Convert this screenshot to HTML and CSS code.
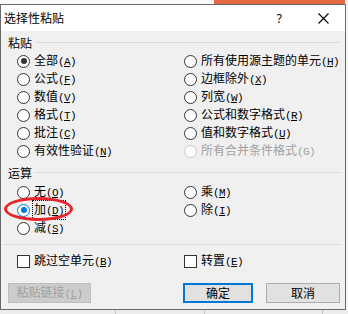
FILE: index.html
```html
<!DOCTYPE html>
<html lang="zh-CN">
<head>
<meta charset="utf-8">
<title>选择性粘贴</title>
<link rel="stylesheet" href="styles.css">
</head>
<body>
<div class="topstrip"><div class="ts-left"></div><div class="ts-banner"></div><div class="ts-right"></div></div>
<div class="stage">
  <div class="dialog">
    <div class="titlebar">
      <span class="title">选择性粘贴</span>
      <span class="help">?</span>
      <svg class="close" width="11" height="11" viewBox="0 0 11 11"><path d="M0.5 0.5 L10.5 10.5 M10.5 0.5 L0.5 10.5" stroke="#000" stroke-width="1.1" fill="none"/></svg>
    </div>
    <div class="content">
      <div class="group-head first"><span class="group-label">粘贴</span><span class="group-line"></span></div>
      <div class="opts paste">
        <label class="opt"><span class="radio checked"></span><span>全部<span class="acc">(<u>A</u>)</span></span></label>
        <label class="opt"><span class="radio"></span><span>所有使用源主题的单元<span class="acc">(<u>H</u>)</span></span></label>
        <label class="opt"><span class="radio"></span><span>公式<span class="acc">(<u>F</u>)</span></span></label>
        <label class="opt"><span class="radio"></span><span>边框除外<span class="acc">(<u>X</u>)</span></span></label>
        <label class="opt"><span class="radio"></span><span>数值<span class="acc">(<u>V</u>)</span></span></label>
        <label class="opt"><span class="radio"></span><span>列宽<span class="acc">(<u>W</u>)</span></span></label>
        <label class="opt"><span class="radio"></span><span>格式<span class="acc">(<u>T</u>)</span></span></label>
        <label class="opt"><span class="radio"></span><span>公式和数字格式<span class="acc">(<u>R</u>)</span></span></label>
        <label class="opt"><span class="radio"></span><span>批注<span class="acc">(<u>C</u>)</span></span></label>
        <label class="opt"><span class="radio"></span><span>值和数字格式<span class="acc">(<u>U</u>)</span></span></label>
        <label class="opt"><span class="radio"></span><span>有效性验证<span class="acc">(<u>N</u>)</span></span></label>
        <label class="opt disabled"><span class="radio"></span><span>所有合并条件格式<span class="acc">(G)</span></span></label>
      </div>
      <div class="group-head"><span class="group-label">运算</span><span class="group-line"></span></div>
      <div class="opts ops">
        <label class="opt"><span class="radio"></span><span>无<span class="acc">(<u>O</u>)</span></span></label>
        <label class="opt"><span class="radio"></span><span>乘<span class="acc">(<u>M</u>)</span></span></label>
        <label class="opt"><span class="radio checked hot"></span><span class="focus">加<span class="acc">(<u>D</u>)</span></span></label>
        <label class="opt"><span class="radio"></span><span>除<span class="acc">(<u>I</u>)</span></span></label>
        <label class="opt"><span class="radio"></span><span>减<span class="acc">(<u>S</u>)</span></span></label>
      </div>
      <div class="sep"></div>
      <div class="opts checks">
        <label class="opt"><span class="check"></span><span>跳过空单元<span class="acc">(<u>B</u>)</span></span></label>
        <label class="opt"><span class="check"></span><span>转置<span class="acc">(<u>E</u>)</span></span></label>
      </div>
      <div class="buttons">
        <button class="btn link" disabled>粘贴链接<span class="acc">(<u>L</u>)</span></button>
        <div class="btn-pair">
          <button class="btn ok">确定</button>
          <button class="btn cancel">取消</button>
        </div>
      </div>
    </div>
    <div class="annot"></div>
  </div>
  <div class="stage-right"></div>
</div>
<div class="sheet"><div class="cell"></div><div class="cell"></div><div class="cell"></div><div class="cell last"></div></div>
</body>
</html>
```

FILE: styles.css
```css
html, body {
  margin: 0;
  padding: 0;
}
body {
  width: 348px;
  height: 314px;
  overflow: hidden;
  background: #f4f4f4;
  font-family: "Noto Sans CJK SC", "Noto Sans", sans-serif;
  font-size: 12px;
  color: #000;
}
.topstrip {
  display: flex;
  height: 4px;
}
.ts-left { width: 214px; background: #fafafa; }
.ts-banner { width: 131px; background: #e4683f; }
.ts-right { flex: 1; background: #fafafa; }

.stage {
  display: flex;
}
.stage-right {
  flex: 1;
  background: #f6f6f6;
}
.dialog {
  position: relative;
  width: 346px;
  height: 306px;
  box-sizing: border-box;
  border: 1px solid #6a6a6a;
  background: #f0f0f0;
}
.titlebar {
  display: flex;
  align-items: center;
  height: 26px;
  background: #fff;
  padding-left: 3px;
}
.title {
  font-size: 12px;
  line-height: 14px;
}
.help {
  margin-left: auto;
  font-family: "Noto Sans", sans-serif;
  font-size: 12px;
  line-height: 14px;
  margin-right: 36px;
  margin-top: 1px;
}
.close {
  margin-right: 16px;
  margin-top: 1px;
}
.content {
  padding: 0 5px 0 7px;
}
.group-head {
  display: flex;
  align-items: center;
  height: 13px;
  margin-top: 6px;
}
.group-head.first {
  margin-top: 5px;
}
.group-label {
  line-height: 13px;
}
.group-line {
  flex: 1;
  height: 1px;
  background: #dcdcdc;
  margin-left: 4px;
}
.opts {
  display: grid;
  grid-template-columns: 167px 1fr;
  grid-auto-rows: 18px;
  padding-left: 9px;
}
.paste { margin-top: 3px; }
.ops { margin-top: 4px; }
.opt {
  display: flex;
  align-items: center;
  gap: 4px;
  white-space: nowrap;
  line-height: 14px;
}
.acc {
  font-family: "Liberation Mono", monospace;
  font-size: 11px;
  letter-spacing: -0.6px;
}
.acc u {
  text-underline-offset: 1px;
}
.radio {
  position: relative;
  width: 13px;
  height: 13px;
  box-sizing: border-box;
  border: 1px solid #333;
  border-radius: 50%;
  background: #fff;
  flex: none;
}
.radio.checked::after {
  content: "";
  position: absolute;
  left: 2.5px;
  top: 2.5px;
  width: 6px;
  height: 6px;
  border-radius: 50%;
  background: #333;
}
.radio.hot {
  border-color: #0078d7;
}
.radio.hot::after {
  background: #0078d7;
}
.disabled {
  color: #a0a0a0;
}
.disabled .radio {
  border-color: #c8c8c8;
  background: #fdfdfd;
}
.focus {
  outline: 1px dotted #000;
  outline-offset: 1px;
}
.sep {
  height: 1px;
  background: #dcdcdc;
  margin: 7px 0 0 -4px;
}
.checks {
  margin-top: 7px;
}
.check {
  width: 13px;
  height: 13px;
  box-sizing: border-box;
  border: 1px solid #333;
  background: #fff;
  flex: none;
}
.buttons {
  display: flex;
  margin-top: 13px;
}
.btn {
  height: 20px;
  box-sizing: border-box;
  font-family: "Noto Sans CJK SC", "Noto Sans", sans-serif;
  font-size: 12px;
  line-height: 14px;
  padding: 0;
  border: 1px solid #adadad;
  background: #e1e1e1;
  color: #000;
}
.btn.link {
  width: 83px;
  background: #cccccc;
  border-color: #bfbfbf;
  color: #a0a0a0;
}
.btn-pair {
  display: flex;
  gap: 13px;
  margin-left: auto;
}
.btn.ok {
  width: 70px;
  border: 2px solid #0078d7;
}
.btn.cancel {
  width: 74px;
}
.annot {
  position: absolute;
  left: 3px;
  top: 192px;
  width: 69px;
  height: 24px;
  box-sizing: border-box;
  border: 3px solid #e8232a;
  border-radius: 50%;
}
.sheet {
  display: grid;
  grid-template-columns: 116px 89px 118px 1fr;
  height: 4px;
  background: #ececec;
}
.cell {
  border-right: 1px solid #c6c6c6;
}
.cell.last {
  border-right: none;
}
```
